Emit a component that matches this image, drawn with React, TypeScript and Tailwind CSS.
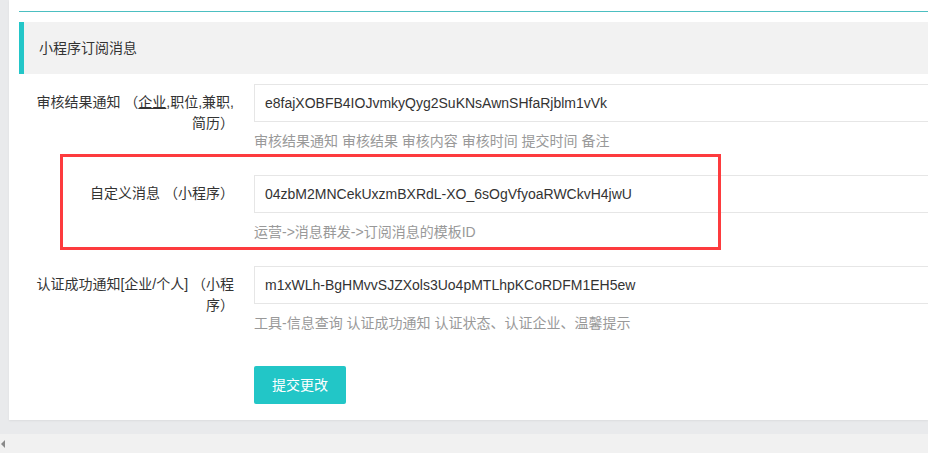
import React from 'react';

const font = { fontFamily: '"Liberation Sans", "Noto Sans CJK SC", sans-serif' };

type Row = {
    label: React.ReactNode;
    value: string;
    help: string;
};

const rows: Row[] = [
    {
        label: (
            <>
                审核结果通知 （<span className="underline">企业</span>,职位,兼职,
                <br />
                简历）
            </>
        ),
        value: 'e8fajXOBFB4IOJvmkyQyg2SuKNsAwnSHfaRjblm1vVk',
        help: '审核结果通知 审核结果 审核内容 审核时间 提交时间 备注',
    },
    {
        label: <>自定义消息 （小程序）</>,
        value: '04zbM2MNCekUxzmBXRdL-XO_6sOgVfyoaRWCkvH4jwU',
        help: '运营->消息群发->订阅消息的模板ID',
    },
    {
        label: (
            <>
                认证成功通知[企业/个人] （小程
                <br />
                序）
            </>
        ),
        value: 'm1xWLh-BgHMvvSJZXols3Uo4pMTLhpKCoRDFM1EH5ew',
        help: '工具-信息查询 认证成功通知 认证状态、认证企业、温馨提示',
    },
];

function FormRow({ row }: { row: Row }) {
    return (
        <div className="flex mb-[15px]">
            <label className="w-[235px] shrink-0 pt-[8px] pr-[20px] text-right text-[14px] leading-[21px] text-[#333] whitespace-nowrap">
                {row.label}
            </label>
            <div className="flex flex-col">
                <input
                    readOnly
                    value={row.value}
                    className="w-[720px] h-[38px] border border-[#e6e6e6] px-[10px] text-[14px] text-[#333] outline-none bg-white"
                    style={font}
                />
                <div className="py-[9px] text-[14px] leading-[20px] text-[#999]">{row.help}</div>
            </div>
        </div>
    );
}

export default function App() {
    return (
        <div className="w-[928px] h-[453px] overflow-hidden bg-[#e9eaec] flex flex-col" style={font}>
            <div className="flex-1 pl-[9px] pb-[14px] min-h-0">
                <div className="h-full bg-white pl-[10px] shadow-[0_1px_2px_rgba(0,0,0,0.06)]">
                    <div className="h-[12px] border-b border-[#4cbfc1]" />
                    <div className="mt-[10px] h-[52px] flex items-center bg-[#f2f2f2] border-l-[5px] border-[#23c6c8] pl-[15px] text-[14px] text-[#333]">
                        小程序订阅消息
                    </div>
                    <div className="relative mt-[10px]">
                        {rows.map((row, i) => (
                            <FormRow key={i} row={row} />
                        ))}
                        <div className="absolute left-[41px] top-[70px] w-[661px] h-[96px] border-[3px] border-[#fd3b3e] pointer-events-none" />
                        <div className="pl-[235px] pt-[9px]">
                            <button className="h-[38px] px-[18px] rounded-[2px] bg-[#22c6c7] text-white text-[14px]">
                                提交更改
                            </button>
                        </div>
                    </div>
                </div>
            </div>
            <div className="h-[19px] shrink-0 bg-[#f1f1f1] flex items-center pl-[1px]">
                <svg width="5" height="8" viewBox="0 0 5 8">
                    <polygon points="4,0 4,8 0,4" fill="#8a8a8a" />
                </svg>
            </div>
        </div>
    );
}
